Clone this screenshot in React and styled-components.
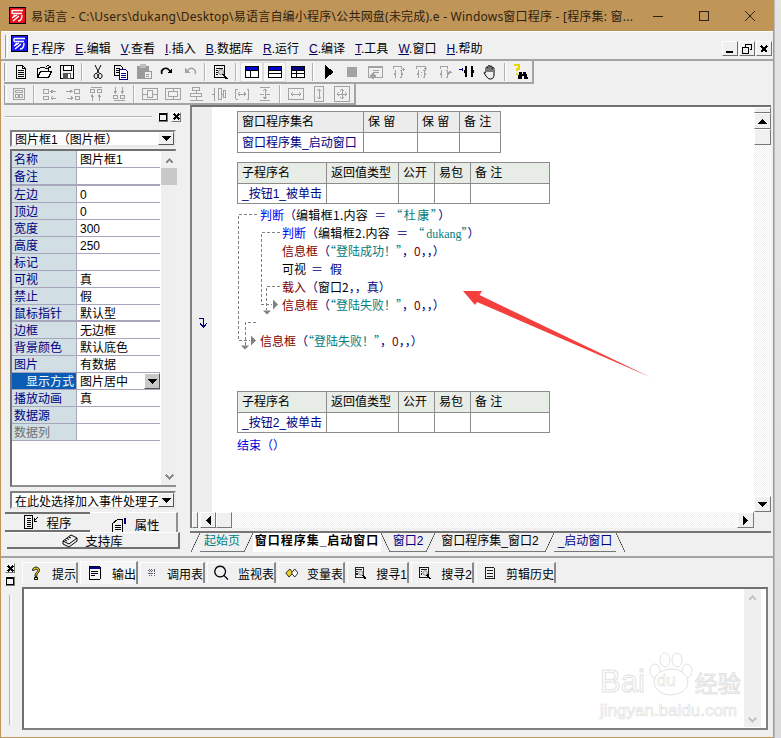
import styled, { createGlobalStyle } from "styled-components";

const GlobalStyle = createGlobalStyle`
  html, body { margin: 0; padding: 0; background: #f0f0f0; }
  * { box-sizing: border-box; }
  body {
    font-family: "Liberation Sans", "Noto Sans CJK SC", sans-serif;
    font-size: 12px;
    color: #000;
  }
`;

const Page = styled.div`
  width: 781px;
  height: 738px;
  display: flex;
  overflow: hidden;
`;
const Frame = styled.div`
  width: 774px;
  height: 738px;
  flex: none;
  display: flex;
  flex-direction: column;
  border-left: 1px solid #c09558;
  border-right: 1px solid #c09558;
  border-bottom: 1px solid #c09558;
  background: #f0f0f0;
`;
const Outside = styled.div`
  flex: 1;
  background: linear-gradient(#e4e4e4, #dcdcdc);
  border-left: 1px solid #bbb;
`;

/* title bar */
const TitleBar = styled.div`
  height: 31px;
  flex: none;
  background: #c09558;
  display: flex;
  align-items: center;
  padding-left: 8px;
  color: #2e2210;
  font-family: "Noto Sans", "Noto Sans CJK SC", sans-serif;
`;
const TitleText = styled.div`
  margin-left: 5px;
  width: 604px;
  white-space: nowrap;
  overflow: hidden;
  letter-spacing: 0.22px;
`;
const CaptionButtons = styled.div`
  display: flex;
  margin-left: 2px;
`;
const CaptionButton = styled.div`
  width: 46px;
  height: 31px;
  display: flex;
  align-items: center;
  justify-content: center;
`;

/* menu */
const MenuBar = styled.div`
  height: 30px;
  flex: none;
  display: flex;
  align-items: flex-start;
  padding: 3px 0 0 4px;
  border-top: 1px solid #fff;
  border-bottom: 2px solid #a4a4a4;
`;
const Grip = styled.div`
  width: 3px;
  height: ${(p) => p.$h || 20}px;
  flex: none;
  margin-right: ${(p) => p.$mr || 0}px;
  border-left: 1px solid #a0a0a0;
  border-right: 1px solid #fff;
`;
const MenuItems = styled.div`
  display: flex;
  gap: 10px;
  margin: 6px 0 0 4px;
  line-height: 17px;
`;
const MenuKey = styled.span`
  text-decoration: underline;
  color: #000060;
`;
const MdiButtons = styled.div`
  margin-left: auto;
  margin-right: 1px;
  margin-top: 6px;
  display: flex;
  gap: 1px;
`;
const MdiButton = styled.div`
  width: 16px;
  height: 15px;
  background: #f0f0f0;
  border: 1px solid;
  border-color: #fff #707070 #707070 #fff;
  display: flex;
  align-items: center;
  justify-content: center;
`;

/* toolbars */
const ToolRow = styled.div`
  height: ${(p) => p.$h}px;
  flex: none;
  display: flex;
  align-items: center;
  padding-left: 3px;
`;
const ToolBar = styled.div`
  height: 100%;
  width: ${(p) => p.$w}px;
  display: flex;
  align-items: center;
  border-right: 2px solid #a4a4a4;
  border-bottom: 2px solid #a4a4a4;
`;
const ToolItems = styled.div`
  display: flex;
  align-items: center;
  margin-left: ${(p) => p.$left}px;
`;
const ToolButton = styled.div`
  width: 23px;
  height: 20px;
  display: flex;
  align-items: center;
  justify-content: center;
  background: ${(p) => (p.$pressed ? "#fafafa" : "transparent")};
  border: 1px solid ${(p) => (p.$pressed ? "#dcdcdc" : "transparent")};
`;
const ToolSep = styled.div`
  width: 2px;
  height: 18px;
  margin: 0 3px;
  background: #b0b0b0;
  border-right: 1px solid #fff;
`;

/* main */
const Main = styled.div`
  height: 450px;
  flex: none;
  display: flex;
`;
const LeftPanel = styled.div`
  width: 182px;
  flex: none;
  padding: 0 2px 0 4px;
  display: flex;
  flex-direction: column;
`;
const PanelHead = styled.div`
  height: 23px;
  flex: none;
  display: flex;
  align-items: center;
  gap: 3px;
  justify-content: flex-end;
`;
const PanelRidge = styled.div`
  flex: 1;
  height: 2px;
  margin-right: 3px;
  background: #b4b4b4;
  border-bottom: 1px solid #fff;
`;
const SmallButton = styled.div`
  width: 10px;
  height: 10px;
  display: flex;
  align-items: center;
  justify-content: center;
  background: #f0f0f0;
  border: 1px solid;
  border-color: #fff #777 #777 #fff;
  flex: none;
`;
const Combo = styled.div`
  height: ${(p) => p.$h}px;
  flex: none;
  margin: ${(p) => p.$m};
  display: flex;
  align-items: center;
  justify-content: space-between;
  padding-left: 3px;
  background: #fff;
  border: 2px solid;
  border-color: #808080 #e8e8e8 #e8e8e8 #808080;
  white-space: nowrap;
  overflow: hidden;
`;
const ComboText = styled.span`
  overflow: hidden;
  flex: 1;
`;
const ComboButton = styled.div`
  width: 16px;
  height: 100%;
  flex: none;
  display: flex;
  align-items: center;
  justify-content: center;
  background: ${(p) => p.$bg || "#f0f0f0"};
  border: 1px solid;
  border-color: #fff #555 #555 #fff;
`;
const PropFrame = styled.div`
  height: 338px;
  flex: none;
  margin: 2px 5px 0 5px;
  display: flex;
  background: #fff;
  border: 2px solid;
  border-color: #707070 #909090 #909090 #707070;
`;
const PropList = styled.div`
  width: 148px;
  flex: none;
`;
const PropRow = styled.div`
  height: ${(p) => (p.$tall ? 18 : 17)}px;
  display: flex;
  border-bottom: ${(p) => (p.$thick ? 2 : 1)}px solid #a6a6bc;
  line-height: 18px;
`;
const PropName = styled.div`
  width: 65px;
  flex: none;
  padding-left: ${(p) => (p.$active ? 14 : 2)}px;
  white-space: nowrap;
  border-right: 1px solid #a6a6bc;
  background: ${(p) => (p.$active ? "#0a5cb4" : "#d1dee3")};
  color: ${(p) => (p.$active ? "#fff" : p.$off ? "#707070" : "#000080")};
`;
const PropValue = styled.div`
  flex: 1;
  display: flex;
  justify-content: space-between;
  padding-left: 3px;
`;
const PropScroll = styled.div`
  width: 16px;
  flex: none;
  margin-left: 1px;
  background: #efefef;
  display: flex;
  flex-direction: column;
  align-items: center;
  justify-content: space-between;
  padding: 7px 0 5px;
`;
const PropThumb = styled.div`
  width: 16px;
  height: 17px;
  margin-top: 4px;
  background: #c8c8c8;
`;
const PropScrollTop = styled.div`
  display: flex;
  flex-direction: column;
  align-items: center;
`;
const SideTabs = styled.div`
  display: flex;
  margin-top: 3px;
  height: 20px;
  flex: none;
`;
const SideTab = styled.div`
  width: ${(p) => p.$w}px;
  display: flex;
  align-items: center;
  justify-content: center;
  gap: 7px;
  font-size: 12.5px;
  background: #f0f0f0;
  border-top: ${(p) => (p.$raised ? "1px solid #fff" : "2px solid #707070")};
  border-bottom: ${(p) => (p.$raised ? "none" : "2px solid #707070")};
  border-right: ${(p) => (p.$raised ? "2px solid #909090" : "none")};
  padding: ${(p) => (p.$raised ? "4px 0 0 5px" : "0")};
`;
const SideLib = styled(SideTab)`
  margin-left: 2px;
  height: 17px;
  width: 173px;
  flex: none;
  border-top: 1px solid #fff;
  border-right: 2px solid #707070;
  border-bottom: 2px solid #707070;
  padding: 0;
`;

/* editor */
const EditorColumn = styled.div`
  width: 581px;
  margin-left: 7px;
  flex: none;
  display: flex;
  flex-direction: column;
`;
const EditorGrid = styled.div`
  height: 423px;
  flex: none;
  display: grid;
  grid-template-columns: 20px 542px 17px;
  grid-template-rows: 405px 16px;
  border-left: 2px solid #808080;
  border-top: 2px solid #707070;
`;
const Gutter = styled.div`
  background: #eee;
  padding: 210px 0 0 6px;
`;
const Sheet = styled.div`
  position: relative;
  background: #fff;
  padding: 4px 0 0 25px;
`;
const FlowLines = styled.svg`
  position: absolute;
  left: 0;
  top: 0;
`;
const Table = styled.table`
  border-collapse: collapse;
  table-layout: fixed;
  margin-bottom: ${(p) => p.$mb || 0}px;
`;
const Cell = styled.td`
  width: ${(p) => p.$w}px;
  height: ${(p) => (p.$head ? 21 : 20)}px;
  padding: 0 0 0 4px;
  border: 1px solid #8c8c8c;
  background: ${(p) => (p.$head ? p.$bg || "#e8ece6" : "#fff")};
  color: ${(p) => (p.$link ? "#000080" : "#000")};
  white-space: pre;
  line-height: 14px;
`;
const CodeBlock = styled.div`
  margin-top: 2px;
  height: 185px;
  font-family: "Noto Sans CJK SC", sans-serif;
`;
const CodeLine = styled.div`
  height: 18px;
  line-height: 18px;
  margin-left: ${(p) => p.$indent}px;
  white-space: pre;
`;
const Word = styled.span`
  color: ${(p) => p.$c};
  margin-left: ${(p) => p.$ml || 0}px;
  margin-right: ${(p) => p.$mr || 0}px;
  letter-spacing: ${(p) => p.$ls || 0}px;
  font-family: ${(p) => (p.$serif ? '"Liberation Serif", serif' : "inherit")};
`;
const Ending = styled.div`
  margin-top: 3px;
  line-height: 18px;
  color: #0000e0;
  white-space: pre;
  font-family: "Noto Sans CJK SC", sans-serif;
`;
const VScroll = styled.div`
  display: flex;
  flex-direction: column;
  background: repeating-conic-gradient(#f0f0f0 0 25%, #fff 0 50%) 0 0 / 2px 2px;
`;
const ScrollButton = styled.div`
  width: ${(p) => p.$w || 17}px;
  height: ${(p) => p.$h || 16}px;
  flex: none;
  display: flex;
  align-items: center;
  justify-content: center;
  background: #f0f0f0;
  border: 1px solid;
  border-color: #fff #777 #777 #fff;
  margin-left: ${(p) => p.$ml || 0}px;
`;
const HScroll = styled.div`
  grid-column: 1 / span 2;
  display: flex;
  background: repeating-conic-gradient(#f0f0f0 0 25%, #fff 0 50%) 0 0 / 2px 2px;
`;
const Spacer = styled.div`
  flex: 1;
`;
const TabBar = styled.div`
  height: 22px;
  margin-top: 3px;
  flex: none;
  display: flex;
  border-top: 2px solid #777;
  padding-left: 1px;
  line-height: 17px;
`;
const PageTab = styled.div`
  width: ${(p) => p.$w}px;
  height: 19px;
  text-align: center;
  white-space: nowrap;
  font-weight: ${(p) => (p.$active ? 700 : 400)};
  letter-spacing: ${(p) => (p.$active ? 1 : 0)}px;
  color: ${(p) => p.$c || "#000080"};
  border-bottom: ${(p) => (p.$active ? "none" : "1px solid #777")};
  background: ${(p) => (p.$active ? "#fff" : "transparent")};
`;
const Slash = styled.div`
  width: 9px;
  height: 19px;
  flex: none;
  background: linear-gradient(
    ${(p) => (p.$back ? "to top right" : "to bottom right")},
    transparent calc(50% - 0.6px),
    #222 50%,
    transparent calc(50% + 0.6px)
  );
`;

/* bottom panel */
const BottomPanel = styled.div`
  flex: 1;
  display: flex;
  border-top: 2px solid #a4a4a4;
  margin-top: 1px;
  padding: 4px 0 0 3px;
`;
const DockButtons = styled.div`
  width: 12px;
  margin-right: 4px;
  flex: none;
  display: flex;
  flex-direction: column;
  align-items: center;
  gap: 3px;
  padding-top: 1px;
`;
const DockGrip = styled.div`
  width: 3px;
  height: 130px;
  margin-top: 6px;
  border-left: 1px solid #b8b8b8;
  border-right: 1px solid #fff;
`;
const BottomBody = styled.div`
  flex: 1;
  display: flex;
  flex-direction: column;
  padding-left: 2px;
`;
const OutTabs = styled.div`
  height: 21px;
  flex: none;
  display: flex;
  gap: 2px;
  margin-bottom: 4px;
`;
const OutTab = styled.div`
  width: ${(p) => p.$w}px;
  height: ${(p) => (p.$active ? 23 : 21)}px;
  margin-top: ${(p) => (p.$active ? -1 : 0)}px;
  display: flex;
  align-items: center;
  gap: 9px;
  padding-left: 6px;
  white-space: nowrap;
  border-top: 1px solid #fff;
  border-left: 1px solid #fff;
  border-right: 2px solid #8a8a8a;
  background: ${(p) => (p.$active ? "#f6f6f6" : "#f0f0f0")};
`;
const OutBox = styled.div`
  position: relative;
  width: 746px;
  height: 143px;
  display: flex;
  justify-content: flex-end;
  background: #fff;
  border: 2px solid;
  border-color: #707070 #808080 #808080 #707070;
  padding-right: 5px;
`;
const OutScroll = styled.div`
  width: 17px;
  height: 138px;
  background: #efefef;
  display: flex;
  flex-direction: column;
  align-items: center;
  justify-content: space-between;
  padding: 6px 0 4px;
`;

/* things lying on top of the shot */
const Arrow = styled.svg`
  position: absolute;
  left: 463px;
  top: 290px;
`;
const Watermark = styled.div`
  position: absolute;
  left: 576px;
  top: 63px;
  width: 142px;
  height: 70px;
  font-family: "Liberation Sans", sans-serif;
`;
const MarkHead = styled.div`
  display: flex;
  align-items: flex-end;
  font-size: 31px;
  line-height: 32px;
  height: 46px;
  -webkit-text-stroke: 1px #e2e2e2;
  color: #fff;
`;
const MarkDu = styled.div`
  position: relative;
  width: 48px;
  height: 46px;
  flex: none;
  margin: 0 0 0 2px;
`;
const MarkDuText = styled.span`
  position: absolute;
  left: 10px;
  top: 20px;
  font-size: 17px;
  line-height: 18px;
  -webkit-text-stroke: 0.6px #e2e2e2;
`;
const MarkCn = styled.span`
  font-family: "Noto Sans CJK SC", sans-serif;
  font-size: 23px;
`;
const MarkUrl = styled.div`
  font-size: 17px;
  line-height: 18px;
  margin-top: 4px;
  white-space: nowrap;
  color: #fff;
  -webkit-text-stroke: 0.7px #e2e2e2;
`;
const Screen = styled.div`
  position: relative;
  width: 781px;
  height: 738px;
  overflow: hidden;
`;

const Svg = ({ size = 16, w, h, box, children, ...rest }) => (
  <svg
    width={w || size}
    height={h || size}
    viewBox={box || `0 0 ${size} ${size}`}
    fill="none"
    stroke="#000"
    strokeWidth="1"
    shapeRendering="crispEdges"
    {...rest}
  >
    {children}
  </svg>
);

const G = "#a2a2a2";

const Logo = ({ color, w = 17, h = 17 }) => (
  <svg width={w} height={h} viewBox="0 0 17 17" style={{ flex: "none" }}>
    <rect x="0.5" y="0.5" width="16" height="16" fill={color} stroke="#000" />
    <path
      d="M3 3.5h11M3 6.5h10M3 3.5v3M8 8l-5 3M13 8c0 4-1 6-4 6M10 9l-6 5M6 8l-2 2"
      fill="none"
      stroke="#fff"
      strokeWidth="1.4"
    />
  </svg>
);

const braces = "M6 6.500H5v3H4v1h1v3h1M10 6.500h1v3h1v1h-1v3h-1";

const icons = {
  doc: (
    <path d="M3.5 1.5h6l3 3v10h-9zM9.5 1.5v3h3M5 6.5h6M5 8.5h6M5 10.5h6M5 12.5h6" />
  ),
  open: (
    <>
      <path d="M1.5 13.5v-9h2l1-1h4l1 1h3v2" />
      <path d="M1.5 13.5l3-6h11l-3 6z" fill="#fff" />
      <path d="M10 2.5c2-1 3-1 4 1M14 1.5v2h-2" />
    </>
  ),
  save: (
    <>
      <path d="M1.5 1.5h13v13h-13z" />
      <rect x="4" y="1" width="8" height="5" fill="#fff" />
      <rect x="4" y="9" width="8" height="6" fill="#555" stroke="none" />
      <rect x="9" y="10" width="2" height="4" fill="#fff" stroke="none" />
    </>
  ),
  cut: (
    <path
      d="M5 1l4 8M11 1L7 9M6 9.5a2 2.5 0 1 0 .1 0M10 9.5a2 2.5 0 1 0 .1 0"
      shapeRendering="auto"
    />
  ),
  copy: (
    <>
      <path d="M1.5 1.5h6l2 2v8h-8zM3 4.5h4M3 6.5h4M3 8.5h4" />
      <path d="M6.5 5.5h6l2 2v8h-8z" fill="#fff" stroke="#000080" />
      <path d="M8 9.5h5M8 11.5h5M8 13.5h5" stroke="#000080" />
    </>
  ),
  paste: (
    <>
      <rect x="1" y="2" width="12" height="13" rx="1" fill="#9a9a9a" stroke="none" />
      <rect x="4" y="0" width="6" height="4" fill="#bdbdbd" stroke="none" />
      <rect x="8" y="7.5" width="7" height="7" fill="#f0f0f0" stroke="#9a9a9a" />
      <path d="M10 10.5h3M10 12.5h3" stroke="#9a9a9a" />
    </>
  ),
  redo: (
    <>
      <path d="M3 10C1 6 6 3 9 5l2 2" strokeWidth="1.6" shapeRendering="auto" />
      <path d="M13 4v5H8z" fill="#000" stroke="none" />
    </>
  ),
  undo: (
    <>
      <path d="M13 10c2-4-3-7-6-5L5 7" stroke={G} strokeWidth="1.4" shapeRendering="auto" />
      <path d="M3 4v5h5z" fill={G} stroke="none" />
    </>
  ),
  find: (
    <>
      <path d="M1.5 1.5h10v12h-10zM3 4h7M3 6h2M3 8h2M3 10h2" />
      <circle cx="8" cy="8" r="2.5" fill="#ddd" stroke="#888" shapeRendering="auto" />
      <path d="M10 10l4 5" strokeWidth="2" />
    </>
  ),
  layoutA: (
    <>
      <rect x="1.5" y="2.5" width="13" height="11" fill="#fff" />
      <rect x="2" y="3" width="12" height="3" fill="#0000d0" stroke="none" />
      <path d="M1.5 6.5h13M6.5 6.5v7" />
    </>
  ),
  layoutB: (
    <>
      <rect x="1.5" y="2.5" width="13" height="11" fill="#fff" />
      <rect x="2" y="3" width="12" height="3" fill="#0000d0" stroke="none" />
      <path d="M1.5 6.5h13M1.5 9.5h13" />
    </>
  ),
  layoutC: (
    <>
      <rect x="1.5" y="2.5" width="13" height="11" fill="#fff" />
      <rect x="2" y="3" width="12" height="3" fill="#000080" stroke="none" />
      <path d="M1.5 6.5h13M1.5 9.5h13M6.5 6.5v7" />
    </>
  ),
  play: <path d="M4 1l9 7-9 7z" fill="#000" stroke="none" />,
  stop: <rect x="3" y="3" width="10" height="10" fill={G} stroke="none" />,
  run: (
    <>
      <rect x="1" y="2" width="14" height="11" fill="#f0f0f0" stroke={G} />
      <rect x="1" y="2" width="14" height="2" fill={G} stroke="none" />
      <path d="M6 6h6M6 8h6M3 12l3-3 3 3-3 3z" fill={G} stroke={G} />
    </>
  ),
  braceIn: (
    <path d={`${braces}M3 5V2.500h8V5M14.500 5.500h-3M13 4v3`} stroke={G} />
  ),
  braceOver: (
    <path d={`${braces}M3 5V2.500h9V5M8 8v1M8 11v1M11 4h3l-1.500 2z`} stroke={G} />
  ),
  braceOut: (
    <path d={`${braces}M4 5V2.500h7V5M11 8.500h4M13 7l2 1.500-2 1.500`} stroke={G} />
  ),
  braceTo: (
    <>
      <path d="M8 3H7v4H6v1h1v4h1M12 3h1v4h1v1h-1v4h-1" strokeWidth="1.3" />
      <path d="M0 5h4M3 3.5v3" stroke="#000080" />
    </>
  ),
  hand: (
    <path
      d="M4 8V4a1 1 0 0 1 2 0V2.5a1 1 0 0 1 2 0V3a1 1 0 0 1 2 0v1.5a1 1 0 0 1 2 0V11c0 2-1 4-3.500 4H8c-2 0-3-2-4-3L2 9c0-1 1-1 2 0M6 4v4M8 3v5M10 4v4"
      shapeRendering="auto"
    />
  ),
  help: (
    <>
      <path d="M1 1h5v4H4v2" stroke="#e8d800" strokeWidth="2" />
      <path d="M4 9v2" stroke="#e8d800" strokeWidth="2" />
      <path d="M6 8h3v7H5zM10 8h3l2 7h-4z" fill="#000" stroke="none" />
      <path d="M9 10h2v2H9z" fill="#000" stroke="none" />
    </>
  ),
  form: <path d="M2.500 2.500h11v11h-11zM4.500 4.500h7v2h-7zM4.500 8.500h3v3h-3zM8.500 8.500h3v3h-3z" stroke={G} />,
  alignL: <path d="M1.500 3.500h5v4h-5zM1.500 10.500h5v3h-5zM9 5.500h5M9 12h5M11 4l-2 1.500L11 7M11 10.500L9 12l2 1.500" stroke={G} />,
  alignR: <path d="M9.500 3.500h5v4h-5zM10.500 10.500h4v3h-4zM1 5.500h6M2 12h6M5 4l2 1.500L5 7M6 10.500L8 12l-2 1.500" stroke={G} />,
  alignT: <path d="M2.500 1.500h11M2.500 3.500h4v3h-4zM9.500 3.500h4v3h-4zM4.500 9v6M11.500 9v6M3 11l1.500-2L6 11M10 11l1.500-2 1.500 2" stroke={G} />,
  alignB: <path d="M2.500 14.500h11M2.500 9.500h4v3h-4zM9.500 9.500h4v3h-4zM4.500 1v6M11.500 1v6M3 5l1.500 2L6 5M10 5l1.500 2L13 5" stroke={G} />,
  centerV: <path d="M.500 2.500h15v11H.500zM5.500 4.500h5v7h-5zM.500 8h5M10.500 8h5" stroke={G} />,
  centerH: <path d="M.500 2.500h15v11H.500zM3.500 5.500h9v5h-9zM8 2.500v3M8 10.500v3" stroke={G} />,
  spaceH: <path d="M1.500 14.500h13M4.500 1.500h7v3h-7zM2.500 7.500h11v3h-11zM8 4.500v3M8 10.500v4" stroke={G} />,
  spaceV: <path d="M3.500 1.500v13M7.500 2.500h3v11h-3zM12.500 4.500h2v7h-2zM1 8h2.500M10.500 8h2" stroke={G} />,
  gapH: <path d="M1.500 3v10M14.500 3v10h-2M14.500 3h-2M1.500 3h2M1.500 13h2M4 8h8M6 6.500L4 8l2 1.500M10 6.500L12 8l-2 1.500" stroke={G} />,
  gapV: <path d="M3 1.500h10M3 14.500h10M8 3v10M6.500 5L8 3l1.500 2M6.500 11L8 13l1.500-2M3 8h4M9 8h4" stroke={G} />,
  sizeW: <path d="M.500 2.500h15v11H.500zM3 8h10M5 6L3 8l2 2M11 6l2 2-2 2" stroke={G} />,
  sizeH: <path d="M3.500 .500h9v15h-9zM8 3v10M6 5l2-2 2 2M6 11l2 2 2-2" stroke={G} />,
  sizeAll: <path d="M.500 .500h15v15H.500zM3 8h10M8 3v10M5 6L3 8l2 2M11 6l2 2-2 2M6 5l2-2 2 2M6 11l2 2 2-2" stroke={G} />,
  tip: (
    <>
      <path d="M4 5c0-5 8-5 8 0 0 3-4 3-3 7H7C6 8 10 7 10 5 10 3 6 3 6 5z" fill="#f2dd20" stroke="#000" shapeRendering="auto" />
      <rect x="6.500" y="13" width="3" height="3" fill="#f2dd20" stroke="#000" />
    </>
  ),
  output: (
    <>
      <path d="M2.500 1.500h11v13h-11zM4.500 6.500h7M4.500 8.500h7M4.500 10.500h4" />
      <rect x="3" y="2" width="10" height="2" fill="#0000a0" stroke="none" />
    </>
  ),
  calls: <path d="M3 2v12M7 2v12M11 2v12M1 5h12M1 9h12" strokeDasharray="2 1" stroke="#223" />,
  watch: <path d="M10 10l5 5M6.500 .800a5.700 5.700 0 1 0 .1 0" strokeWidth="1.400" shapeRendering="auto" />,
  vars: (
    <>
      <path d="M1 8l5-5 4 5-5 5z" fill="#e8d020" stroke="#000" shapeRendering="auto" />
      <path d="M8 8l4-5 4 5-4 5z" fill="#fff" stroke="#000" shapeRendering="auto" />
    </>
  ),
  history: <path d="M2.500 1.500h9l2 2v11h-11zM4.500 5.500h7M4.500 8.500h7M4.500 11.500h7" />,
  program: (
    <>
      <path d="M1.500 1.500h8v13h-8zM3.500 4.500h4M3.500 6.500h4M3.500 8.500h4M3.500 10.500h4M3.500 12.500h4" />
      <path d="M15 3l-4 4M11 4v3h3" />
    </>
  ),
  props: (
    <>
      <path d="M1.500 6.500l5-4h5v13h-10zM3.500 8.500h6M3.500 10.500h6M3.500 12.500h6" />
      <rect x="13" y="1" width="2" height="6" fill="#000080" stroke="none" />
    </>
  ),
  lib: (
    <path
      d="M1 9l8-6 6 3-8 6zM1 9v3l6 3 8-6V6M3 8l2 1M5 6.500l2 1M7 5l2 1"
      shapeRendering="auto"
    />
  ),
};

const Icon = ({ name }) => <Svg>{icons[name]}</Svg>;

const Down = () => (
  <Svg w={9} h={5} box="0 0 9 5">
    <path d="M0 0h9L4.500 5z" fill="#000" stroke="none" />
  </Svg>
);
const Chevron = ({ up, color = "#8c8c8c" }) => (
  <Svg w={9} h={6} box="0 0 9 6">
    <path d={up ? "M1 5l3.500-3.500L8 5" : "M1 1l3.500 3.500L8 1"} stroke={color} strokeWidth="1.800" />
  </Svg>
);
const Close = ({ s = 8 }) => (
  <Svg w={s} h={s} box="0 0 8 8">
    <path d="M1 1l6 6M7 1L1 7" strokeWidth="1.800" />
  </Svg>
);
const Box = () => (
  <Svg w={8} h={8} box="0 0 8 8">
    <path d="M.500 .500h7v7h-7z" />
    <path d="M0 1.500h8" />
  </Svg>
);

const toolRowOne = [
  ["doc", "open", "save"],
  ["cut", "copy", "paste", "redo", "undo"],
  ["find"],
  ["layoutA", "layoutB", "layoutC"],
  ["play", "stop", "run", "braceIn", "braceOver", "braceOut", "braceTo", "hand"],
  ["help"],
];
const toolRowTwo = [
  ["form"],
  ["alignL", "alignR", "alignT", "alignB"],
  ["centerV", "centerH", "spaceH", "spaceV", "gapH", "gapV"],
  ["sizeW", "sizeH", "sizeAll"],
];
const pressedTools = ["layoutA", "layoutB"];

const menus = [
  ["F", ".程序"],
  ["E", ".编辑"],
  ["V", ".查看"],
  ["I", ".插入"],
  ["B", ".数据库"],
  ["R", ".运行"],
  ["C", ".编译"],
  ["T", ".工具"],
  ["W", ".窗口"],
  ["H", ".帮助"],
];

const props = [
  { name: "名称", value: "图片框1" },
  { name: "备注", thick: true, tall: true },
  { name: "左边", value: "0" },
  { name: "顶边", value: "0" },
  { name: "宽度", value: "300" },
  { name: "高度", value: "250" },
  { name: "标记" },
  { name: "可视", value: "真" },
  { name: "禁止", value: "假" },
  { name: "鼠标指针", value: "默认型", thick: true },
  { name: "边框", value: "无边框" },
  { name: "背景颜色", value: "默认底色" },
  { name: "图片", value: "有数据" },
  { name: "显示方式", value: "图片居中", active: true },
  { name: "播放动画", value: "真" },
  { name: "数据源" },
  { name: "数据列", off: true },
];

const outTabs = [
  { icon: "tip", label: "提示", w: 56 },
  { icon: "output", label: "输出", w: 58, active: true },
  { icon: "calls", label: "调用表", w: 65 },
  { icon: "watch", label: "监视表", w: 69 },
  { icon: "vars", label: "变量表", w: 67 },
  { icon: "find", label: "搜寻1", w: 62 },
  { icon: "find", label: "搜寻2", w: 63 },
  { icon: "history", label: "剪辑历史", w: 80 },
];

const BLUE = "#0000ff";
const NAVY = "#000080";
const RED = "#800000";
const TEAL = "#008080";
const EQ = { $ml: 6, $mr: 4 };

const messageLine = (indent, text) => ({
  indent,
  parts: [
    ["信息框", RED],
    ["（", NAVY],
    [text, TEAL],
    ["，", NAVY],
    ["0", RED],
    ["，，）", NAVY],
  ],
});

const code = [
  {
    indent: 23,
    parts: [
      ["判断", BLUE],
      ["（", NAVY],
      ["编辑框1.内容", "#000", { $ls: 0.3 }],
      ["＝", NAVY, EQ],
      ["“杜康”", TEAL, { $ls: 1.5 }],
      ["）", NAVY],
    ],
  },
  {
    indent: 45,
    parts: [
      ["判断", BLUE],
      ["（", NAVY],
      ["编辑框2.内容", "#000", { $ls: 0.3 }],
      ["＝", NAVY, EQ],
      ["“", TEAL],
      ["dukang", TEAL, { $serif: true, $ml: 2 }],
      ["”", TEAL],
      ["）", NAVY],
    ],
  },
  messageLine(45, "“登陆成功！”"),
  {
    indent: 45,
    parts: [
      ["可视", "#000"],
      ["＝", NAVY, { $ml: 5, $mr: 7 }],
      ["假", NAVY],
    ],
  },
  {
    indent: 45,
    parts: [
      ["载入", RED],
      ["（", NAVY],
      ["窗口2", "#000"],
      ["，，", NAVY],
      ["真", NAVY],
      ["）", NAVY],
    ],
  },
  messageLine(45, "“登陆失败！”"),
  { indent: 45, parts: [] },
  messageLine(23, "“登陆失败！”"),
];

const subHead = [
  ["子程序名", 89],
  ["返回值类型", 72],
  ["公开", 36],
  ["易包", 36],
  ["备 注", 79],
];

const SubTable = ({ name, mb }) => (
  <Table $mb={mb}>
    <tbody>
      <tr>
        {subHead.map(([label, w]) => (
          <Cell key={label} $head $w={w}>
            {label}
          </Cell>
        ))}
      </tr>
      <tr>
        <Cell $link>{name}</Cell>
        <Cell />
        <Cell />
        <Cell />
        <Cell />
      </tr>
    </tbody>
  </Table>
);

const renderTools = (groups) =>
  groups.map((group, i) => (
    <ToolItems key={i} $left={0}>
      {i > 0 && <ToolSep />}
      {group.map((name) => (
        <ToolButton key={name} $pressed={pressedTools.includes(name)}>
          <Icon name={name} />
        </ToolButton>
      ))}
    </ToolItems>
  ));

const TreeLines = () => (
  <FlowLines width="300" height="260" viewBox="212 107 300 260" fill="none">
    <g stroke="#808080" strokeDasharray="3 2" shapeRendering="crispEdges">
      <path d="M257 214.500h-18.500V340.500H250" />
      <path d="M280 232.500h-18.500V304.500H272" />
      <path d="M280 286.500h-13.500V310" />
      <path d="M256 322.500h-10.500V346" />
    </g>
    <g fill="#808080">
      <path d="M273 299.500l5 5-5 5z" />
      <path d="M263 310.500h8l-4 4z" />
      <path d="M251 335.500l5 5-5 5z" />
      <path d="M241 345.500h8l-4 4z" />
    </g>
  </FlowLines>
);

export default function App() {
  return (
    <Screen>
      <GlobalStyle />
      <Page>
        <Frame>
          <TitleBar>
            <Logo color="#e8101c" />
            <TitleText>
              易语言 - C:\Users\dukang\Desktop\易语言自编小程序\公共网盘(未完成).e - Windows窗口程序 - [程序集: 窗...
            </TitleText>
            <CaptionButtons>
              <CaptionButton>
                <Svg w={10} h={10} box="0 0 10 10" stroke="#2e2210">
                  <path d="M0 5.500h10" />
                </Svg>
              </CaptionButton>
              <CaptionButton>
                <Svg w={10} h={10} box="0 0 10 10" stroke="#2e2210">
                  <path d="M.500 .500h9v9h-9z" />
                </Svg>
              </CaptionButton>
              <CaptionButton>
                <Svg w={10} h={10} box="0 0 10 10" stroke="#2e2210" shapeRendering="auto">
                  <path d="M0 0l10 10M10 0L0 10" />
                </Svg>
              </CaptionButton>
            </CaptionButtons>
          </TitleBar>

          <MenuBar>
            <Grip $h={23} $mr={3} />
            <Logo color="#1a1af0" />
            <MenuItems>
              {menus.map(([key, label]) => (
                <span key={key}>
                  <MenuKey>{key}</MenuKey>
                  {label}
                </span>
              ))}
            </MenuItems>
            <MdiButtons>
              <MdiButton>
                <Svg w={8} h={8} box="0 0 8 8">
                  <path d="M0 6.500h7" strokeWidth="2" />
                </Svg>
              </MdiButton>
              <MdiButton>
                <Svg w={10} h={10} box="0 0 10 10">
                  <path d="M3.500 2.500v-2h6v5h-2M.500 3.500h6v6h-6z" />
                </Svg>
              </MdiButton>
              <MdiButton>
                <Close />
              </MdiButton>
            </MdiButtons>
          </MenuBar>

          <ToolRow $h={23}>
            <ToolBar $w={530}>
              <Grip $h={18} />
              <ToolItems $left={2}>{renderTools(toolRowOne)}</ToolItems>
            </ToolBar>
          </ToolRow>
          <ToolRow $h={21}>
            <ToolBar $w={352}>
              <Grip $h={18} />
              <ToolItems $left={0}>{renderTools(toolRowTwo)}</ToolItems>
            </ToolBar>
          </ToolRow>

          <Main>
            <LeftPanel>
              <PanelHead>
                <PanelRidge />
                <SmallButton>
                  <Box />
                </SmallButton>
                <SmallButton>
                  <Close s={7} />
                </SmallButton>
              </PanelHead>
              <Combo $h={17} $m="2px 5px 0 5px">
                <ComboText>图片框1（图片框）</ComboText>
                <ComboButton>
                  <Down />
                </ComboButton>
              </Combo>
              <PropFrame>
                <PropList>
                  {props.map((p) => (
                    <PropRow key={p.name} $thick={p.thick} $tall={p.tall}>
                      <PropName $active={p.active} $off={p.off}>
                        {p.name}
                      </PropName>
                      <PropValue>
                        {p.value}
                        {p.active && (
                          <ComboButton $bg="#c8c8c8">
                            <Down />
                          </ComboButton>
                        )}
                      </PropValue>
                    </PropRow>
                  ))}
                </PropList>
                <PropScroll>
                  <PropScrollTop>
                    <Chevron up />
                    <PropThumb />
                  </PropScrollTop>
                  <Chevron />
                </PropScroll>
              </PropFrame>
              <Combo $h={18} $m="4px 5px 0 5px">
                <ComboText>在此处选择加入事件处理子程序</ComboText>
                <ComboButton>
                  <Down />
                </ComboButton>
              </Combo>
              <SideTabs>
                <SideTab $w={85}>
                  <Icon name="program" />
                  程序
                </SideTab>
                <SideTab $w={88} $raised>
                  <Icon name="props" />
                  属性
                </SideTab>
              </SideTabs>
              <SideLib>
                <Icon name="lib" />
                支持库
              </SideLib>
            </LeftPanel>

            <EditorColumn>
              <EditorGrid>
                <Gutter>
                  <Svg w={9} h={11} box="0 0 9 11" stroke="#000080">
                    <path d="M1 1.500h4.500v8M2 6.500l3.500 3.500 3-3.500" strokeWidth="1.300" />
                  </Svg>
                </Gutter>
                <Sheet>
                  <TreeLines />
                  <Table $mb={9}>
                    <tbody>
                      <tr>
                        <Cell $head $bg="#ececec" $w={126}>窗口程序集名</Cell>
                        <Cell $head $bg="#ececec" $w={54}>保 留</Cell>
                        <Cell $head $bg="#ececec" $w={42}>保 留</Cell>
                        <Cell $head $bg="#ececec" $w={41}>备 注</Cell>
                      </tr>
                      <tr>
                        <Cell $link>窗口程序集_启动窗口</Cell>
                        <Cell />
                        <Cell />
                        <Cell />
                      </tr>
                    </tbody>
                  </Table>
                  <SubTable name="_按钮1_被单击" />
                  <CodeBlock>
                    {code.map((line, i) => (
                      <CodeLine key={i} $indent={line.indent}>
                        {line.parts.map(([text, color, opts], j) => (
                          <Word key={j} $c={color} {...opts}>
                            {text}
                          </Word>
                        ))}
                      </CodeLine>
                    ))}
                  </CodeBlock>
                  <SubTable name="_按钮2_被单击" />
                  <Ending>结束（）</Ending>
                </Sheet>
                <VScroll>
                  <ScrollButton $h={6} />
                  <ScrollButton $h={16}>
                    <Svg w={9} h={5} box="0 0 9 5">
                      <path d="M0 5h9L4.500 0z" fill="#000" stroke="none" />
                    </Svg>
                  </ScrollButton>
                  <ScrollButton />
                  <Spacer />
                  <ScrollButton>
                    <Down />
                  </ScrollButton>
                </VScroll>
                <HScroll>
                  <ScrollButton $w={6} />
                  <ScrollButton $w={16} $ml={2}>
                    <Svg w={5} h={9} box="0 0 5 9">
                      <path d="M5 0v9L0 4.500z" fill="#000" stroke="none" />
                    </Svg>
                  </ScrollButton>
                  <ScrollButton $w={16} />
                  <Spacer />
                  <ScrollButton>
                    <Svg w={5} h={9} box="0 0 5 9">
                      <path d="M0 0v9l5-4.500z" fill="#000" stroke="none" />
                    </Svg>
                  </ScrollButton>
                </HScroll>
              </EditorGrid>

              <TabBar>
                <Slash />
                <PageTab $w={44} $c="#008080">起始页</PageTab>
                <Slash />
                <PageTab $w={128} $active $c="#000">窗口程序集_启动窗口</PageTab>
                <Slash $back />
                <PageTab $w={36}>窗口2</PageTab>
                <Slash />
                <PageTab $w={110} $c="#000">窗口程序集_窗口2</PageTab>
                <Slash />
                <PageTab $w={62}>_启动窗口</PageTab>
                <Slash $back />
              </TabBar>
            </EditorColumn>
          </Main>

          <BottomPanel>
            <DockButtons>
              <SmallButton>
                <Close s={7} />
              </SmallButton>
              <SmallButton>
                <Box />
              </SmallButton>
              <DockGrip />
            </DockButtons>
            <BottomBody>
              <OutTabs>
                {outTabs.map((t) => (
                  <OutTab key={t.label} $w={t.w} $active={t.active}>
                    <Icon name={t.icon} />
                    {t.label}
                  </OutTab>
                ))}
              </OutTabs>
              <OutBox>
                <OutScroll>
                  <Chevron up color="#c4c4c4" />
                  <Chevron color="#c4c4c4" />
                </OutScroll>
                <Watermark>
                  <MarkHead>
                    Bai
                    <MarkDu>
                      <Svg w={48} h={46} box="0 0 48 46" stroke="#e2e2e2" shapeRendering="auto">
                        <ellipse cx="8" cy="19" rx="5" ry="7" fill="#fff" />
                        <ellipse cx="18" cy="8" rx="5" ry="7" fill="#fff" />
                        <ellipse cx="30" cy="8" rx="5" ry="7" fill="#fff" />
                        <ellipse cx="40" cy="19" rx="5" ry="7" fill="#fff" />
                        <ellipse cx="24" cy="30" rx="17" ry="13" fill="#fff" />
                      </Svg>
                      <MarkDuText>du</MarkDuText>
                    </MarkDu>
                    <MarkCn>经验</MarkCn>
                  </MarkHead>
                  <MarkUrl>jingyan.baidu.com</MarkUrl>
                </Watermark>
              </OutBox>
            </BottomBody>
          </BottomPanel>
        </Frame>
        <Outside />
      </Page>
      <Arrow width="190" height="90" viewBox="463 290 190 90">
        <path d="M463 291L482 291 479.500 295 650 377 477 302 475 305z" fill="#f4403c" />
      </Arrow>
    </Screen>
  );
}
